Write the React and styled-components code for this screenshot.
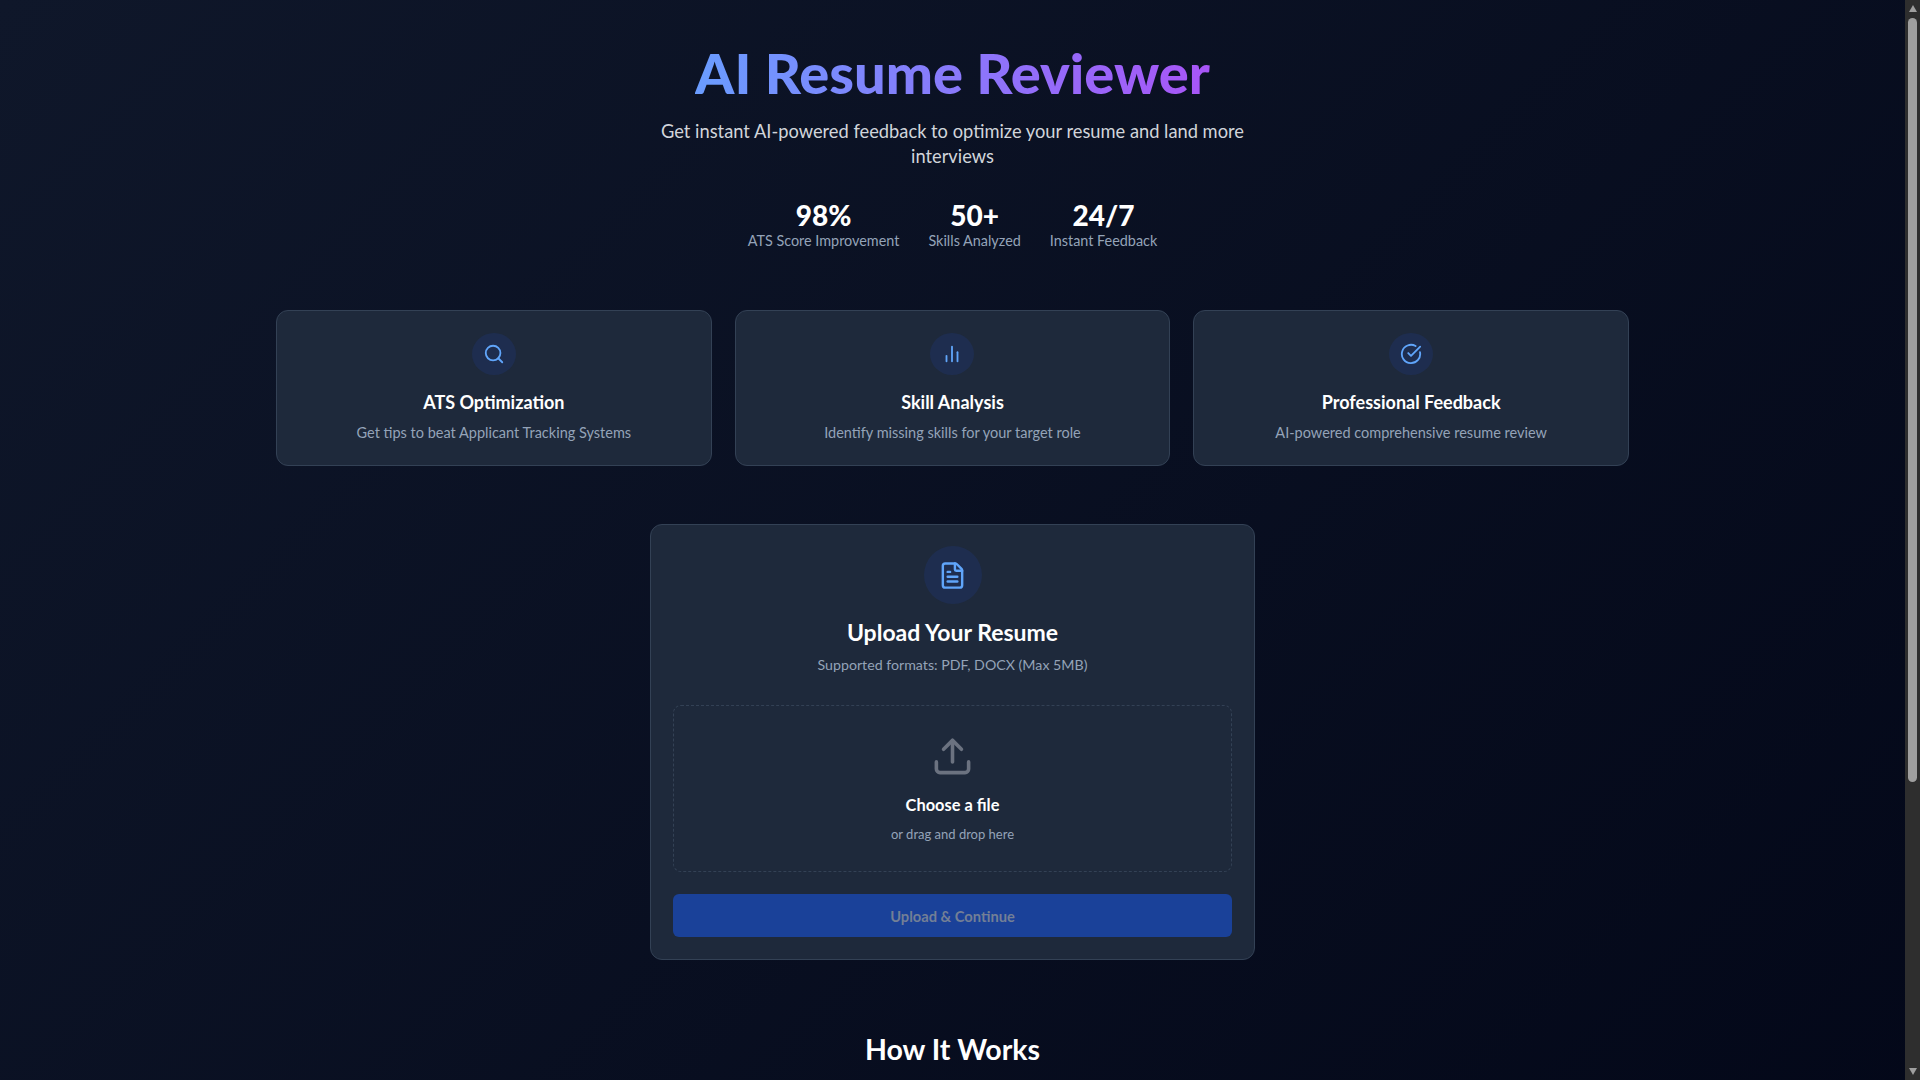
import styled, { createGlobalStyle } from "styled-components";
import { Search, CircleCheckBig, FileText, Upload } from "lucide-react";

const GlobalStyle = createGlobalStyle`
    * {
        box-sizing: border-box;
    }
    body {
        margin: 0;
        font-family: Lato, "Open Sans", sans-serif;
        color: #ffffff;
        background: #020617;
    }
`;

const Shell = styled.div`
    display: flex;
    height: 100vh;
    overflow: hidden;
`;
const ScrollArea = styled.div`
    flex: 1;
    min-width: 0;
    overflow: hidden;
`;
const Canvas = styled.div`
    min-height: 1477px;
    background: linear-gradient(135deg, #0f172a 0%, #020617 100%);
`;
const ScrollTrack = styled.aside`
    display: flex;
    flex-direction: column;
    align-items: center;
    flex: 0 0 15px;
    padding-top: 5px;
    background: #2e2e2e;
`;
const ArrowUp = styled.span`
    width: 0;
    height: 0;
    border-left: 4.5px solid transparent;
    border-right: 4.5px solid transparent;
    border-bottom: 7px solid #9f9f9f;
`;
const ArrowDown = styled.span`
    width: 0;
    height: 0;
    margin-top: 286px;
    border-left: 4.5px solid transparent;
    border-right: 4.5px solid transparent;
    border-top: 7px solid #9f9f9f;
`;
const ScrollThumb = styled.span`
    width: 9px;
    height: 764px;
    margin-top: 6px;
    border-radius: 5px;
    background: #9f9f9f;
`;
const Page = styled.main`
    max-width: 1400px;
    margin: 0 auto;
    padding: 39px 23.5px;
`;
const Header = styled.header`
    display: flex;
    flex-direction: column;
    align-items: center;
    text-align: center;
`;
const Title = styled.h1`
    margin: 0;
    font-size: 56px;
    line-height: 68px;
    font-weight: 900;
    background: linear-gradient(90deg, #6a9dff, #a855f7);
    -webkit-background-clip: text;
    background-clip: text;
    color: transparent;
`;
const Subtitle = styled.p`
    max-width: 600px;
    margin: 12px 0 0;
    font-size: 18.3px;
    line-height: 25px;
    color: #d1d5db;
`;
const Stats = styled.div`
    display: flex;
    gap: 29px;
    margin-top: 30px;
`;
const Stat = styled.div`
    display: flex;
    flex-direction: column;
    align-items: center;
`;
const StatNumber = styled.strong`
    font-size: 28px;
    line-height: 32px;
    font-weight: 900;
`;
const StatLabel = styled.span`
    font-size: 14.4px;
    line-height: 20px;
    color: #94a3b8;
`;
const Features = styled.section`
    display: grid;
    grid-template-columns: repeat(3, 1fr);
    gap: 23px;
    margin-top: 59px;
`;
const Card = styled.div`
    background: #1e293b;
    border: 1px solid #334155;
    border-radius: 12px;
`;
const FeatureCard = styled(Card)`
    display: flex;
    flex-direction: column;
    align-items: center;
    height: 156px;
    padding: 22px;
`;
const IconCircle = styled.div`
    display: flex;
    align-items: center;
    justify-content: center;
    width: ${(props) => props.$size}px;
    height: ${(props) => props.$size}px;
    border-radius: 50%;
    background: rgba(30, 58, 138, 0.25);
    color: #60a5fa;
`;
const FeatureTitle = styled.h3`
    margin: 15px 0 0;
    font-size: 18px;
    line-height: 24px;
    font-weight: 700;
`;
const FeatureText = styled.p`
    margin: 9px 0 0;
    font-size: 14.5px;
    line-height: 20px;
    color: #94a3b8;
`;
const UploadCard = styled(Card)`
    display: flex;
    flex-direction: column;
    align-items: center;
    width: 605px;
    margin: 58px auto 0;
    padding: 21px 22px 22px;
`;
const UploadTitle = styled.h2`
    margin: 15px 0 0;
    font-size: 23px;
    line-height: 27px;
    font-weight: 700;
`;
const UploadText = styled.p`
    margin: 9px 0 0;
    font-size: 14.2px;
    line-height: 20px;
    color: #94a3b8;
`;
const DropZone = styled.div`
    display: flex;
    flex-direction: column;
    align-items: center;
    width: 100%;
    height: 167px;
    margin-top: 30px;
    padding-top: 29px;
    border: 1px dashed #334155;
    border-radius: 8px;
    color: #6b7280;
`;
const ChooseLabel = styled.span`
    margin-top: 15px;
    font-size: 16.4px;
    line-height: 24px;
    font-weight: 700;
    color: #ffffff;
`;
const DropHint = styled.span`
    margin-top: 8px;
    font-size: 13px;
    line-height: 18px;
    color: #94a3b8;
`;
const UploadButton = styled.button`
    width: 100%;
    height: 43px;
    margin-top: 22px;
    border: 0;
    border-radius: 6px;
    background: #1a4199;
    color: #737f96;
    font-family: inherit;
    font-size: 14.7px;
    font-weight: 700;
`;
const HowItWorks = styled.h2`
    margin: 73px 0 0;
    text-align: center;
    font-size: 28.5px;
    line-height: 32px;
    font-weight: 700;
`;

const BarsIcon = () => (
    <svg width="22" height="22" viewBox="0 0 24 24" fill="none" stroke="currentColor" strokeWidth="2" strokeLinecap="round" strokeLinejoin="round">
        <path d="M18 20V10" />
        <path d="M12 20V4" />
        <path d="M6 20v-6" />
    </svg>
);

const stats = [
    { value: "98%", label: "ATS Score Improvement" },
    { value: "50+", label: "Skills Analyzed" },
    { value: "24/7", label: "Instant Feedback" },
];

const features = [
    { icon: <Search size={22} />, title: "ATS Optimization", text: "Get tips to beat Applicant Tracking Systems" },
    { icon: <BarsIcon />, title: "Skill Analysis", text: "Identify missing skills for your target role" },
    { icon: <CircleCheckBig size={22} />, title: "Professional Feedback", text: "AI-powered comprehensive resume review" },
];

const App = () => {
    return (
        <Shell>
            <GlobalStyle />
            <ScrollArea>
                <Canvas>
                    <Page>
                        <Header>
                            <Title>AI Resume Reviewer</Title>
                            <Subtitle>Get instant AI-powered feedback to optimize your resume and land more interviews</Subtitle>
                            <Stats>
                                {stats.map((item) => (
                                    <Stat key={item.label}>
                                        <StatNumber>{item.value}</StatNumber>
                                        <StatLabel>{item.label}</StatLabel>
                                    </Stat>
                                ))}
                            </Stats>
                        </Header>
                        <Features>
                            {features.map((item) => (
                                <FeatureCard key={item.title}>
                                    <IconCircle $size={44}>{item.icon}</IconCircle>
                                    <FeatureTitle>{item.title}</FeatureTitle>
                                    <FeatureText>{item.text}</FeatureText>
                                </FeatureCard>
                            ))}
                        </Features>
                        <UploadCard>
                            <IconCircle $size={58}>
                                <FileText size={29} />
                            </IconCircle>
                            <UploadTitle>Upload Your Resume</UploadTitle>
                            <UploadText>Supported formats: PDF, DOCX (Max 5MB)</UploadText>
                            <DropZone>
                                <Upload size={43} />
                                <ChooseLabel>Choose a file</ChooseLabel>
                                <DropHint>or drag and drop here</DropHint>
                            </DropZone>
                            <UploadButton>Upload &amp; Continue</UploadButton>
                        </UploadCard>
                        <HowItWorks>How It Works</HowItWorks>
                    </Page>
                </Canvas>
            </ScrollArea>
            <ScrollTrack>
                <ArrowUp />
                <ScrollThumb />
                <ArrowDown />
            </ScrollTrack>
        </Shell>
    );
};

export default App;
